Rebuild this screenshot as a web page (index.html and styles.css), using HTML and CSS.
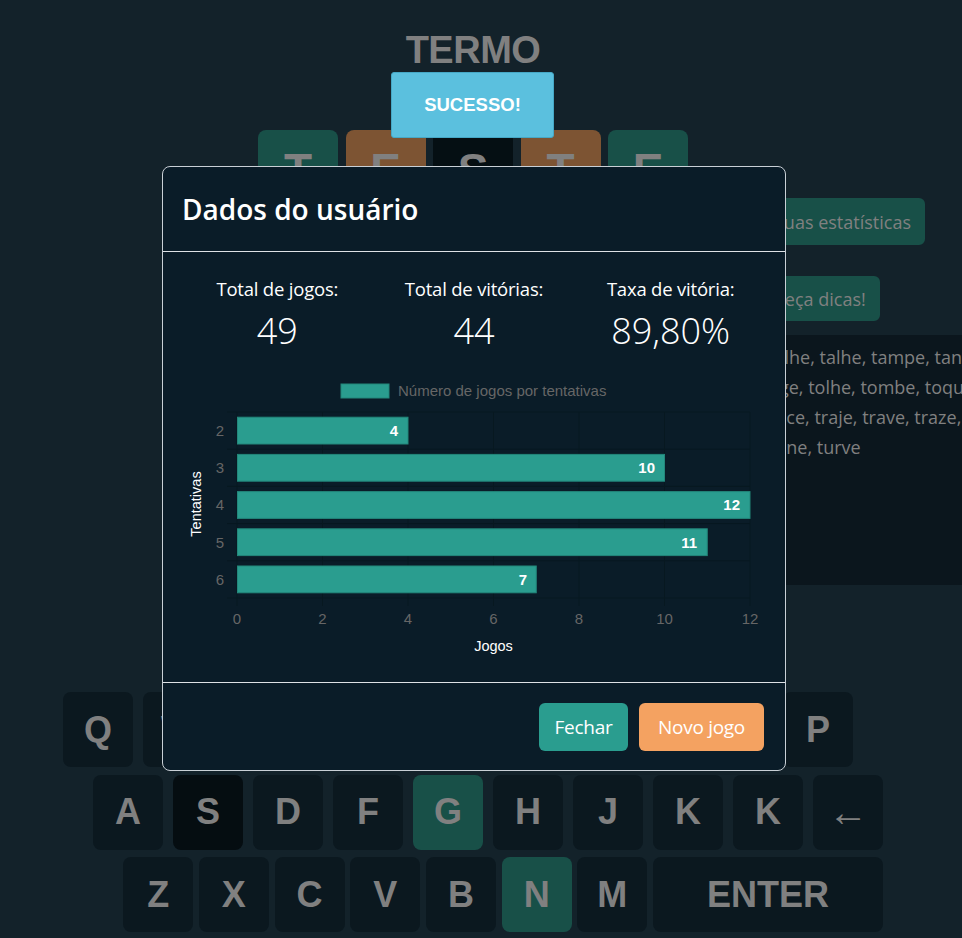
FILE: index.html
```html
<!DOCTYPE html>
<html lang="pt-BR">
<head>
<meta charset="utf-8">
<title>Termo</title>
<link rel="stylesheet" href="styles.css">
</head>
<body>
<div class="page">
  <div class="top">
    <div class="center-col">
      <h1 class="logo">TERMO</h1>
      <div class="toast">SUCESSO!</div>
      <div class="board">
        <div class="board-row">
          <div class="tile green">T</div>
          <div class="tile orange">E</div>
          <div class="tile dark">S</div>
          <div class="tile orange">T</div>
          <div class="tile green">E</div>
        </div>
        <div class="board-row">
          <div class="tile"></div><div class="tile"></div><div class="tile"></div><div class="tile"></div><div class="tile"></div>
        </div>
        <div class="board-row">
          <div class="tile"></div><div class="tile"></div><div class="tile"></div><div class="tile"></div><div class="tile"></div>
        </div>
        <div class="board-row">
          <div class="tile"></div><div class="tile"></div><div class="tile"></div><div class="tile"></div><div class="tile"></div>
        </div>
        <div class="board-row">
          <div class="tile"></div><div class="tile"></div><div class="tile"></div><div class="tile"></div><div class="tile"></div>
        </div>
        <div class="board-row">
          <div class="tile"></div><div class="tile"></div><div class="tile"></div><div class="tile"></div><div class="tile"></div>
        </div>
      </div>
    </div>
    <aside class="side">
      <button class="side-btn first">Suas estatísticas</button>
      <button class="side-btn second">Peça dicas!</button>
      <div class="words">
        <div class="line">telhe, talhe, tampe, tange, tarde</div>
        <div class="line">tige, tolhe, tombe, toque, torce</div>
        <div class="line">trice, traje, trave, traze, treme</div>
        <div class="line">trine, turve</div>
      </div>
    </aside>
  </div>

  <div class="keyboard">
    <div class="krow r1">
      <div class="key">Q</div><div class="key">W</div><div class="key">E</div><div class="key">R</div><div class="key">T</div><div class="key">Y</div><div class="key">U</div><div class="key">I</div><div class="key">O</div><div class="key">P</div>
    </div>
    <div class="krow r2">
      <div class="key">A</div><div class="key dark">S</div><div class="key">D</div><div class="key">F</div><div class="key green">G</div><div class="key">H</div><div class="key">J</div><div class="key">K</div><div class="key">K</div><div class="key arrow">&larr;</div>
    </div>
    <div class="krow r3">
      <div class="key">Z</div><div class="key">X</div><div class="key">C</div><div class="key">V</div><div class="key">B</div><div class="key green">N</div><div class="key">M</div><div class="key enter">ENTER</div>
    </div>
  </div>
</div>

<div class="modal">
  <div class="modal-header">
    <h2 class="modal-title">Dados do usuário</h2>
  </div>
  <div class="modal-body">
    <div class="stats">
      <div class="stat"><div class="stat-label">Total de jogos:</div><div class="stat-value">49</div></div>
      <div class="stat"><div class="stat-label">Total de vitórias:</div><div class="stat-value">44</div></div>
      <div class="stat"><div class="stat-label">Taxa de vitória:</div><div class="stat-value">89,80%</div></div>
    </div>
    <svg class="chart" width="591" height="290" viewBox="0 0 591 290">
      <g class="legend">
        <rect x="162" y="8" width="48" height="14" fill="#2a9d8f" stroke="#23877b" stroke-width="1"/>
        <text x="219" y="20" class="legend-text">Número de jogos por tentativas</text>
      </g>
      <g class="grid" stroke="#071820" stroke-width="1">
        <line x1="48" y1="36" x2="571" y2="36"/>
        <line x1="48" y1="73.2" x2="571" y2="73.2"/>
        <line x1="48" y1="110.4" x2="571" y2="110.4"/>
        <line x1="48" y1="147.6" x2="571" y2="147.6"/>
        <line x1="48" y1="184.8" x2="571" y2="184.8"/>
        <line x1="48" y1="222" x2="571" y2="222"/>
        <line x1="58" y1="36" x2="58" y2="230"/>
        <line x1="143.5" y1="36" x2="143.5" y2="230"/>
        <line x1="229" y1="36" x2="229" y2="230"/>
        <line x1="314.5" y1="36" x2="314.5" y2="230"/>
        <line x1="400" y1="36" x2="400" y2="230"/>
        <line x1="485.5" y1="36" x2="485.5" y2="230"/>
        <line x1="571" y1="36" x2="571" y2="230"/>
      </g>
      <g class="bars" fill="#2a9d8f" stroke="#23877b" stroke-width="1">
        <rect x="58.5" y="41.2" width="170.5" height="26.8"/>
        <rect x="58.5" y="78.4" width="427" height="26.8"/>
        <rect x="58.5" y="115.6" width="512.5" height="26.8"/>
        <rect x="58.5" y="152.8" width="469.75" height="26.8"/>
        <rect x="58.5" y="190" width="298.75" height="26.8"/>
      </g>
      <g class="data-labels">
        <text x="219" y="60">4</text>
        <text x="476" y="97.2">10</text>
        <text x="561" y="134.4">12</text>
        <text x="518" y="171.6">11</text>
        <text x="348" y="208.8">7</text>
      </g>
      <g class="y-ticks">
        <text x="45" y="60">2</text>
        <text x="45" y="97.2">3</text>
        <text x="45" y="134.4">4</text>
        <text x="45" y="171.6">5</text>
        <text x="45" y="208.8">6</text>
      </g>
      <g class="x-ticks">
        <text x="58" y="248">0</text>
        <text x="143.5" y="248">2</text>
        <text x="229" y="248">4</text>
        <text x="314.5" y="248">6</text>
        <text x="400" y="248">8</text>
        <text x="485.5" y="248">10</text>
        <text x="571" y="248">12</text>
      </g>
      <text class="axis-title" x="314.5" y="275">Jogos</text>
      <text class="axis-title" transform="translate(22 128) rotate(-90)">Tentativas</text>
    </svg>
  </div>
  <div class="modal-footer">
    <button class="btn btn-close">Fechar</button>
    <button class="btn btn-new">Novo jogo</button>
  </div>
</div>
</body>
</html>
```

FILE: styles.css
```css
* { box-sizing: border-box; }

html, body {
  margin: 0;
  padding: 0;
}

body {
  background: #13222a;
  width: 962px;
  height: 938px;
  overflow: hidden;
  font-family: "Liberation Sans", Arial, sans-serif;
}

.page {
  display: flex;
  flex-direction: column;
}

.top {
  display: grid;
  grid-template-columns: 258px 430px 72px 1fr;
}

.center-col {
  grid-column: 2;
  position: relative;
  display: flex;
  flex-direction: column;
  align-items: center;
}

.logo {
  margin: 28px 0 0;
  height: 44px;
  line-height: 44px;
  font-size: 38px;
  font-weight: 700;
  color: #808080;
  letter-spacing: -0.5px;
}

.toast {
  position: absolute;
  left: 133px;
  top: 72px;
  width: 163px;
  height: 66px;
  background: #5bc0de;
  border: 1px solid #46a8c6;
  border-radius: 3px;
  color: #fff;
  font-weight: 700;
  font-size: 18.5px;
  display: flex;
  align-items: center;
  justify-content: center;
  z-index: 5;
}

.board {
  margin-top: 58px;
  display: flex;
  flex-direction: column;
  gap: 7px;
}

.board-row {
  display: flex;
  gap: 7.5px;
}

.tile {
  width: 80px;
  height: 80px;
  border-radius: 8px;
  background: #0b181f;
  color: #808080;
  font-weight: 700;
  font-size: 46px;
  display: flex;
  align-items: center;
  justify-content: center;
}

.tile.green { background: #185048; }
.tile.orange { background: #7d5433; }
.tile.dark { background: #050f13; border-radius: 0; }

.side {
  grid-column: 4;
  display: flex;
  flex-direction: column;
  align-items: flex-start;
  padding-top: 198px;
}

.side-btn {
  border: 0;
  background: #185048;
  color: #808080;
  font-family: "Open Sans", sans-serif;
  font-size: 18px;
  border-radius: 6px;
  padding: 0 14px;
  white-space: nowrap;
}

.side-btn.first { height: 47px; }
.side-btn.second { height: 45px; margin-top: 31px; }

.words {
  margin-top: 14px;
  width: 420px;
  height: 250px;
  background: #0b161d;
  padding: 7px 0 0 8px;
  color: #808080;
  font-family: "Open Sans", sans-serif;
  font-size: 18px;
  line-height: 30px;
}

.words .line { white-space: nowrap; }

.keyboard {
  margin-top: 47px;
  margin-left: 63px;
  width: 820px;
  display: flex;
  flex-direction: column;
  gap: 7.5px;
}

.krow {
  display: flex;
}

.krow.r1 { gap: 10px; justify-content: flex-start; }
.krow.r2 { gap: 10px; justify-content: flex-end; }
.krow.r3 { gap: 5.7px; justify-content: flex-end; }

.key {
  width: 70px;
  height: 75px;
  border-radius: 8px;
  background: #0b181f;
  color: #808080;
  font-weight: 700;
  font-size: 36px;
  display: flex;
  align-items: center;
  justify-content: center;
}

.key.dark { background: #050d11; }
.key.green { background: #185048; }
.key.enter { width: 230px; }
.key.arrow { font-weight: 400; font-size: 40px; }

/* modal */
.modal {
  position: fixed;
  left: 162px;
  top: 166px;
  width: 624px;
  height: 605px;
  background: #0a1c28;
  border: 1px solid #c9d0d6;
  border-radius: 8px;
  display: flex;
  flex-direction: column;
  color: #fff;
  font-family: "Open Sans", sans-serif;
  z-index: 10;
}

.modal-header {
  height: 85px;
  border-bottom: 1px solid #dee2e6;
  display: flex;
  align-items: center;
  padding: 0 19px;
}

.modal-title {
  margin: 0;
  font-size: 28px;
  font-weight: 600;
}

.modal-body {
  height: 430px;
  padding: 24px 16px 0;
  display: flex;
  flex-direction: column;
}

.stats {
  display: grid;
  grid-template-columns: repeat(3, 1fr);
  text-align: center;
}

.stat-label {
  font-size: 18.5px;
  line-height: 26px;
  letter-spacing: -0.2px;
}

.stat-value {
  margin-top: 7px;
  font-size: 36px;
  line-height: 44px;
  font-weight: 300;
}

.chart {
  display: block;
  margin-top: 23px;
  font-family: "Liberation Sans", Arial, sans-serif;
}

.legend-text { fill: #666; font-size: 15px; }
.data-labels text { fill: #fff; font-weight: 700; font-size: 15px; text-anchor: end; }
.y-ticks text { fill: #666; font-size: 15px; text-anchor: end; }
.x-ticks text { fill: #666; font-size: 15px; text-anchor: middle; }
.axis-title { fill: #fff; font-size: 14.5px; text-anchor: middle; }

.modal-footer {
  flex: 1;
  border-top: 1px solid #dee2e6;
  display: flex;
  justify-content: flex-end;
  align-items: flex-start;
  gap: 11px;
  padding: 20px 21px 0;
}

.btn {
  height: 48px;
  border: 0;
  border-radius: 6px;
  color: #fff;
  font-family: "Open Sans", sans-serif;
  font-size: 19px;
  padding: 0 10px;
  letter-spacing: -0.3px;
}

.btn-close { background: #2a9d8f; width: 89px; }
.btn-new { background: #f4a261; width: 125px; }
```
